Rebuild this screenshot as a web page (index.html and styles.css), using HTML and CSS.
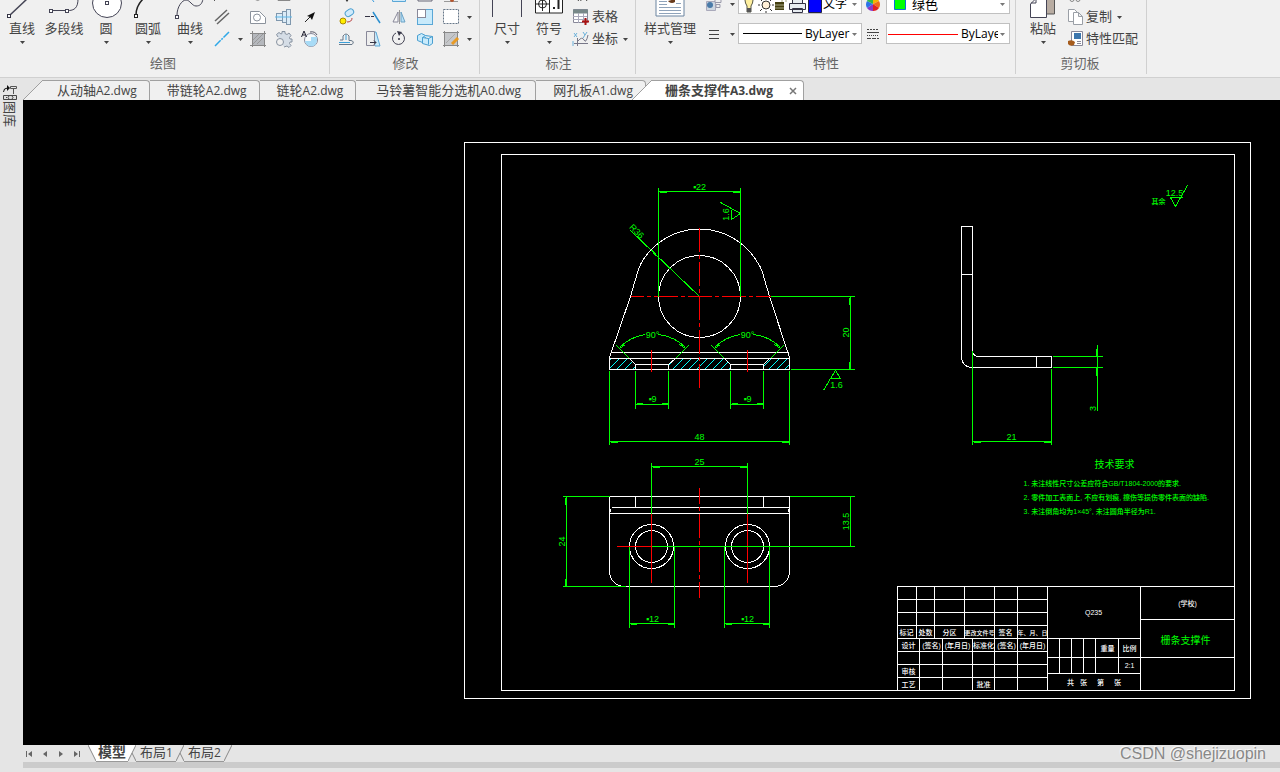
FILE: index.html
```html
<!DOCTYPE html>
<html lang="zh-CN">
  <head>
    <meta charset="UTF-8" />
    <meta name="viewport" content="width=device-width, initial-scale=1.0" />
    <title>栅条支撑件A3.dwg</title>
    <link rel="stylesheet" href="styles.css">
  </head>
  <body>
    <svg class="defs" width="0" height="0" aria-hidden="true">
      <symbol id="caret" viewBox="0 0 8 8"><path d="M2 3h5L4.500 6z" /></symbol>
    </svg>

    <header class="ribbon">
      <section class="group draw">
        <div class="group-body">
          <button class="big">
            <svg class="big-icon" viewBox="0 0 42 20"><path d="M9 15L26-1" stroke="#445" stroke-width="1.500" /><rect x="6.500" y="14.500" width="3" height="3" fill="#fff" stroke="#334" /></svg>
            <span>直线</span><svg class="caret"><use href="#caret" /></svg>
          </button>
          <button class="big">
            <svg class="big-icon" viewBox="0 0 42 20" fill="none" stroke="#445"><path d="M8 10.500H24C32 11 35 7 35-1" /><rect x="6.500" y="9.500" width="3" height="3" fill="#fff" /><rect x="22.500" y="9.500" width="3" height="3" fill="#fff" /></svg>
            <span>多段线</span><svg class="caret hidden"><use href="#caret" /></svg>
          </button>
          <button class="big">
            <svg class="big-icon" viewBox="0 0 42 20" fill="#fff" stroke="#445"><circle cx="22" cy="3" r="14.500" /><rect x="20.500" y="1.500" width="3" height="3" /></svg>
            <span>圆</span><svg class="caret"><use href="#caret" /></svg>
          </button>
          <button class="big">
            <svg class="big-icon" viewBox="0 0 42 20" fill="none" stroke="#222"><path d="M9 15Q9 6 16-1" stroke-width="1.500" /><rect x="7.500" y="14.500" width="3" height="3" fill="#fff" /></svg>
            <span>圆弧</span><svg class="caret"><use href="#caret" /></svg>
          </button>
          <button class="big">
            <svg class="big-icon" viewBox="0 0 42 20" fill="none" stroke="#445"><path d="M8 15C8 7 13 0 17 0S23 6 27 6 33 4 34-1" /><rect x="6.500" y="15.500" width="3" height="3" fill="#fff" /></svg>
            <span>曲线</span><svg class="caret"><use href="#caret" /></svg>
          </button>
          <div class="tools draw-tools">
            <button class="tool" aria-label="射线"><svg class="icon" viewBox="0 0 22 22"><path d="M3 17l2-2" stroke="#555" /></svg></button>
            <button class="tool" aria-label="点"><svg class="icon" viewBox="0 0 22 22"><path d="M7 15q4 3 7 0" fill="none" stroke="#888" /></svg></button>
            <button class="tool" aria-label="矩形"><svg class="icon" viewBox="0 0 22 22"><path d="M5 14v2.500h12V14" fill="none" stroke="#888" /></svg></button>
            <button class="tool" aria-label="多边形"><svg class="icon" viewBox="0 0 22 22"></svg></button>

            <button class="tool" aria-label="双线"><svg class="icon" viewBox="0 0 22 22"><path d="M4 15L16 4M6 18L18 7" stroke="#666" stroke-width="1.500" /></svg></button>
            <button class="tool" aria-label="孔"><svg class="icon" viewBox="0 0 22 22" fill="#fff" stroke="#8b929c"><path d="M3.500 17.500V5.500h9l6 6v6z" /><circle cx="10" cy="11.500" r="3.500" /></svg></button>
            <button class="tool" aria-label="轴"><svg class="icon" viewBox="0 0 22 22" fill="#dcecf7" stroke="#7f97ad"><rect x="3.500" y="7.500" width="6" height="7" /><rect x="9.500" y="5.500" width="4" height="11" /><rect x="13.500" y="3.500" width="4" height="15" /><path d="M2 11h17" stroke="#5db8ea" /></svg></button>
            <button class="tool" aria-label="箭头"><svg class="icon" viewBox="0 0 22 22"><path d="M6 16l7-7" stroke="#222" /><path d="M16 6l-3 8-2-3-3-1z" fill="#111" /></svg></button>

            <button class="tool" aria-label="构造线"><svg class="icon" viewBox="0 0 22 22"><path d="M4 18L18 4" stroke="#2fa8e8" stroke-width="1.500" stroke-dasharray="8 1 2 1" /></svg><svg class="caret"><use href="#caret" /></svg></button>
            <button class="tool" aria-label="填充"><svg class="icon" viewBox="0 0 22 22"><rect x="5" y="5" width="12" height="12" fill="#b5b8bd" /><path d="M5.500 3v16M17.500 3v16M3 5.500h16M3 17.500h16" stroke="#888" /><path d="M6 12l6-6M6 16L16 6M10 16l6-6" stroke="#999" /></svg></button>
            <button class="tool" aria-label="齿轮"><svg class="icon" viewBox="0 0 22 22" fill="#d5dde6" stroke="#8792a0"><path d="M5 9L3.500 6.500 6 4.500 8 6l1-.5V3.500h3v2l2 1 2-1.500 2 2.500-1.500 2 .5 1.500h2v3h-2l-.5 1.500 1.500 2-2 2-2-1.500-3 1" /><circle cx="7" cy="14" r="3.500" fill="#f0f0f0" /></svg></button>
            <button class="tool" aria-label="文字环绕"><svg class="icon" viewBox="0 0 22 22"><circle cx="12" cy="12" r="6.500" fill="#f6fafc" stroke="#889" /><path d="M12 9h6v3a6 6 0 0 1-12 1h6z" fill="#a8dbf6" /><path d="M2.500 9l2.500-6 2.500 6M3.500 7h3" fill="none" stroke="#223" /><path d="M11 4q5-1 7 3" fill="none" stroke="#556" /></svg></button>
          </div>
        </div>
        <h2>绘图</h2>
      </section>

      <section class="group">
        <div class="group-body">
          <div class="tools edit-tools">
            <button class="tool" aria-label="移动"><svg class="icon" viewBox="0 0 22 22"><path d="M9 15h4l-2 3z" fill="#333" /></svg></button>
            <button class="tool" aria-label="修剪"><svg class="icon" viewBox="0 0 22 22"><path d="M9 14l3 4" stroke="#39d" /></svg></button>
            <button class="tool" aria-label="拉伸"><svg class="icon" viewBox="0 0 22 22"><path d="M4.500 14v3.500h13V14" fill="#cfeafb" stroke="#5aa7d6" /></svg></button>
            <button class="tool" aria-label="阵列"><svg class="icon" viewBox="0 0 22 22"><path d="M4 14v3h14v-3" fill="none" stroke="#667" /></svg></button>
            <button class="tool" aria-label="分解"><svg class="icon" viewBox="0 0 22 22"><path d="M4 17.500h14" stroke="#999" /><circle cx="12" cy="16" r="2" fill="#b5532a" /></svg></button>

            <button class="tool" aria-label="复制对象"><svg class="icon" viewBox="0 0 22 22"><circle cx="7" cy="15" r="3" fill="#fe0" stroke="#a80" /><rect x="9" y="4" width="9" height="6" rx="3" transform="rotate(-35 13 7)" fill="#cfeafb" stroke="#4a9fd0" /><path d="M11 16q5 0 5-4" fill="none" stroke="#b44" /></svg></button>
            <button class="tool" aria-label="延伸"><svg class="icon" viewBox="0 0 22 22"><path d="M3 10.500h5m1 0h3" stroke="#334" /><path d="M11 6l7 11" stroke="#2a8fd0" stroke-width="1.500" /></svg></button>
            <button class="tool" aria-label="镜像"><svg class="icon" viewBox="0 0 22 22"><path d="M10 6v10H5z" fill="#f8f8f8" stroke="#889" /><path d="M13 6v10h4z" fill="#b8e0f8" stroke="#6aa2c4" /><path d="M11.500 4v14" stroke="#999" /></svg></button>
            <button class="tool" aria-label="缩放"><svg class="icon" viewBox="0 0 22 22"><rect x="3.500" y="3.500" width="15" height="15" fill="#c8eafb" stroke="#5aa7d6" /><rect x="3.500" y="3.500" width="8" height="8" fill="#fff" stroke="#889" /></svg></button>
            <button class="tool" aria-label="边界"><svg class="icon" viewBox="0 0 22 22"><rect x="3.500" y="3.500" width="15" height="14" fill="#fff" stroke="#678" stroke-dasharray="2 1" /></svg><svg class="caret"><use href="#caret" /></svg></button>

            <button class="tool" aria-label="偏移"><svg class="icon" viewBox="0 0 22 22"><path d="M3 16.500h13q3-3-1-4h-2V8q-3-4-6 0v4H4" fill="none" stroke="#678" /><path d="M3 14.500h11M10 7v5" stroke="#3b9fd8" /></svg></button>
            <button class="tool" aria-label="倾斜"><svg class="icon" viewBox="0 0 22 22"><path d="M10 4h4l4 14h-5z" fill="#c8eafb" stroke="#5aa7d6" /><path d="M4.500 3.500h8v14h-8z" fill="#eee" stroke="#889" /><path d="M8 14.500h6l-2-2m2 2l-2 2" fill="none" stroke="#334" /></svg></button>
            <button class="tool" aria-label="旋转"><svg class="icon" viewBox="0 0 22 22"><path d="M13 5a6 6 0 1 1-5 0" fill="none" stroke="#445" /><path d="M9 3l5 1-3 4z" fill="#334" /><circle cx="11" cy="11" r="1" fill="#334" /></svg></button>
            <button class="tool" aria-label="三维阵列"><svg class="icon" viewBox="0 0 22 22" fill="#c8eafb" stroke="#4a9fd0"><path d="M3.500 7.500l4-2 4 2v6l-3 1-5-2z" /><path d="M8.500 9.500l3-2 7 1v7l-3 2-7-2zM8.500 9.500l6 1 4-2M14.500 10.500v6" /></svg></button>
            <button class="tool" aria-label="编辑填充"><svg class="icon" viewBox="0 0 22 22"><rect x="5" y="5" width="12" height="12" fill="#c5c7ca" /><path d="M3 4.500h16M3 17.500h16M4.500 3v16M17.500 3v16" stroke="#888" /><path d="M6 15l9-9" stroke="#aaa" /><path d="M12 16l6-6" stroke="#e89a24" stroke-width="3" /></svg><svg class="caret"><use href="#caret" /></svg></button>
          </div>
        </div>
        <h2>修改</h2>
      </section>

      <section class="group">
        <div class="group-body">
          <button class="big">
            <svg class="big-icon" viewBox="0 0 42 20"><path d="M6.500 0v17M35.500 0v17" stroke="#445" /></svg>
            <span>尺寸</span><svg class="caret"><use href="#caret" /></svg>
          </button>
          <button class="big">
            <svg class="big-icon" viewBox="0 0 42 20" fill="#fff" stroke="#222"><path d="M7.500-1v14h27V-1M21.500 0v13" /><circle cx="14.500" cy="4" r="4" /><path d="M8 4h13M14.500 0v11" /><path d="M25 8h2M30.500 0v9" stroke-width="2" /></svg>
            <span>符号</span><svg class="caret"><use href="#caret" /></svg>
          </button>
          <div class="tools label-tools">
            <button class="tool" aria-label="引线"><svg class="icon" viewBox="0 0 22 22"><path d="M8 17l2-3 1 3M15 14l2 3" fill="none" stroke="#444" /></svg></button>
            <button class="tool"><svg class="icon" viewBox="0 0 22 22"><path d="M3.500 3.500h14v13h-14z" fill="#fff" stroke="#889" /><path d="M3 5.500h15" stroke="#788" stroke-width="4" /><path d="M3 10.500h14M3 13.500h14M8.500 7v10M13.500 7v10" stroke="#aab" /><path d="M12 15.500h7M15.500 12v7" stroke="#a11" stroke-width="2" /></svg><span>表格</span></button>
            <button class="tool"><svg class="icon" viewBox="0 0 22 22" fill="none"><path d="M7.500 10v8M4 15.500h14M8 13q4-5 6-1t4-5" stroke="#778" /><path d="M4 5l3 4m0-4L4 9M13 4l2 3m2-3l-4 6M3 13v5" stroke="#6ab0da" /></svg><span>坐标</span><svg class="caret"><use href="#caret" /></svg></button>
          </div>
        </div>
        <h2>标注</h2>
      </section>

      <section class="group props">
        <div class="group-body">
          <button class="big wide">
            <svg class="big-icon" viewBox="0 0 56 20"><path d="M14-1h28v17H14z" fill="#fff" stroke="#6b84a0" /><path d="M17 1.500h8M17 4.500h8M17 7.500h22M17 10.500h22M17 13.500h22M34 3.500h5" stroke="#8fa3ba" /><path d="M26 1l7-2v3q-3 2-6 0z" fill="#6a3c1c" /></svg>
            <span>样式管理</span><svg class="caret"><use href="#caret" /></svg>
          </button>
          <div class="prop-grid">
            <button class="tool" aria-label="图层"><svg class="icon" viewBox="0 0 22 22"><path d="M3.500 8.500h9v9h-9z" fill="#cdd6e0" stroke="#aab" /><circle cx="7" cy="12" r="3" fill="#4a7ba8" /><path d="M12 6.500h6v3h-6zM13 11.500h4v3h-4z" fill="#eee" stroke="#99a" /></svg><svg class="caret"><use href="#caret" /></svg></button>
            <div class="combo">
              <svg class="layer-icons" viewBox="0 0 84 20">
                <path d="M6 6q0-4 4-4t4 4q0 3-2 6v6H8v-6Q6 9 6 6z" fill="#fff0a0" stroke="#554" /><path d="M8 14h4v4H8z" fill="#555" />
                <circle cx="27" cy="11" r="4" fill="#fff0d8" stroke="#333" /><path d="M27 3v2M27 17v2M19 11h2M33 11h2M21 5l2 2M31 15l2 2M21 17l2-2M31 7l2-2" stroke="#333" />
                <path d="M36 8h9v8h-9z" fill="#443f10" /><path d="M43 8V4h4v4M36 11h9M36 14h9" fill="none" stroke="#aa8" />
                <path d="M53.500 9V3h10v6M50.500 9.500h16v6h-16zM53.500 14.500h10v4h-10z" fill="#e8edf2" stroke="#334" />
                <path d="M69.500 5.500h13v13h-13z" fill="#00f" stroke="#224" />
              </svg>
              <select aria-label="图层"><option>文字</option></select><svg class="caret"><use href="#caret" /></svg>
            </div>
            <button class="tool wheel" aria-label="颜色"><svg class="icon" viewBox="0 0 22 22"><path d="M11 11V4a7 7 0 0 1 6 4z" fill="#f5b400" /><path d="M11 11l6-3a7 7 0 0 1 0 7z" fill="#f06a1c" /><path d="M11 11l6 4a7 7 0 0 1-6 3z" fill="#e32020" /><path d="M11 11v7a7 7 0 0 1-6-3z" fill="#8a38c8" /><path d="M11 11l-6 4a7 7 0 0 1 0-7z" fill="#2c74e8" /><path d="M11 11L5 8a7 7 0 0 1 6-4z" fill="#32b84a" /></svg></button>
            <div class="combo">
              <svg class="swatch" viewBox="0 0 25 20"><path d="M7.500 4.500h11v11h-11z" fill="#0f0" stroke="#0a6fd6" /></svg>
              <select class="color" aria-label="颜色"><option>绿色</option></select><svg class="caret"><use href="#caret" /></svg>
            </div>

            <button class="tool" aria-label="线宽"><svg class="icon" viewBox="0 0 22 22"><path d="M6 7.500h10M6 11.500h10M6 15.500h10" stroke="#444" /></svg><svg class="caret"><use href="#caret" /></svg></button>
            <div class="combo">
              <svg class="line-sample" viewBox="0 0 66 20"><path d="M4 9.500h59" stroke="#000" /></svg>
              <select aria-label="线型"><option>ByLayer</option></select><svg class="caret"><use href="#caret" /></svg>
            </div>
            <button class="tool" aria-label="线宽样式"><svg class="icon" viewBox="0 0 22 22" stroke="#444"><path d="M5 6.500h12" stroke-dasharray="2 1" /><path d="M5 9.500h12" /><path d="M5 12.500h12" stroke-dasharray="1 1" /><path d="M5 15.500h12" stroke-dasharray="4 1" /></svg></button>
            <div class="combo">
              <svg class="line-sample red" viewBox="0 0 74 20"><path d="M1 10.500h70" stroke="#f00" /></svg>
              <select aria-label="线宽"><option>ByLayer</option></select><svg class="caret"><use href="#caret" /></svg>
            </div>
          </div>
        </div>
        <h2>特性</h2>
      </section>

      <section class="group clipboard">
        <div class="group-body">
          <button class="big">
            <svg class="big-icon" viewBox="0 0 42 20"><path d="M24.500-1h8v15h-8z" fill="#b8aca2" stroke="#555" /><path d="M8.500 4l5-5h11v18.500h-16z" fill="#fff" stroke="#445" /><path d="M9 3h5V0" fill="none" stroke="#445" /></svg>
            <span>粘贴</span><svg class="caret"><use href="#caret" /></svg>
          </button>
          <div class="tools label-tools">
            <button class="tool" aria-label="剪切"><svg class="icon" viewBox="0 0 22 22" fill="none" stroke="#888"><circle cx="8" cy="15.500" r="2" /><circle cx="14" cy="15.500" r="2" /></svg></button>
            <button class="tool"><svg class="icon" viewBox="0 0 22 22" fill="#fff" stroke="#9a9fa6"><path d="M4.500 3.500h6l3 3v9h-9z" /><path d="M9.500 6.500h5l4 4v8h-9zM14.500 6.500v4h4" /></svg><span>复制</span><svg class="caret"><use href="#caret" /></svg></button>
            <button class="tool"><svg class="icon" viewBox="0 0 22 22"><path d="M7.500 3.500h11v14h-11z" fill="#fff" stroke="#889" /><path d="M10 5h7v6h-7z" fill="#3c76ad" /><path d="M13 13.500h4M13 15.500h4" stroke="#889" /><path d="M4 13q4-2 7 1l-1 3q-4 2-6-1z" fill="#a65c1d" /></svg><span>特性匹配</span></button>
          </div>
        </div>
        <h2>剪切板</h2>
      </section>
    </header>

    <main class="main">
      <aside class="rail">
        <button>
          <svg viewBox="0 0 16 16" fill="none" stroke="#111"><path d="M1.500 7q0-4 4-4" /><path d="M5 0l3 3-3 3z" fill="#111" stroke="none" /><path d="M8.500 1.500h6v2h-6zM11.500 4v5" stroke="#555" /><path d="M1.500 10.500h13v4h-13z" fill="#ddd" stroke="#444" /><path d="M4 12.500h1M7 11l-1 1.500L7 14M10 11l1 1.500L10 14" stroke="#444" /></svg>
          <span>图库</span>
        </button>
      </aside>

      <div class="workspace">
        <nav class="file-tabs">
          <svg class="slant" viewBox="0 0 20 20"><path d="M0 20L20 0v20z" fill="#f0f0f0" /><path d="M0 20L20 0" stroke="#a0a0a0" /></svg>
          <button class="file-tab first">从动轴<span>A2.dwg</span></button>
          <button class="file-tab">带链轮<span>A2.dwg</span></button>
          <button class="file-tab">链轮<span>A2.dwg</span></button>
          <button class="file-tab roomy">马铃薯智能分选机<span>A0.dwg</span></button>
          <button class="file-tab">网孔板<span>A1.dwg</span></button>
          <svg class="slant over" viewBox="0 0 20 20"><path d="M0 20L20 0v20z" fill="#fff" /><path d="M0 20L20 0" stroke="#a0a0a0" /></svg>
          <div class="file-tab active">
            <button>栅条支撑件<span>A3.dwg</span></button>
            <button aria-label="关闭"><svg viewBox="0 0 8 8"><path d="M1 1l6 6M7 1L1 7" stroke="#777" stroke-width="1.500" /></svg></button>
          </div>
        </nav>

        <svg class="canvas" viewBox="23 100 1257 645" role="img" aria-label="栅条支撑件图纸">
          <defs>
            <clipPath id="section">
              <path d="M609 358h20l6 6v5h-26zM675 358h49l6 6v5h-62v-5zM769 358h20v11h-26v-5z" />
            </clipPath>
          </defs>
          <g transform="translate(.5 .5)">
            <!-- sheet frames -->
            <path class="w" d="M464 142H1250V698H464zM501 154H1234V690H501z" />

            <!-- front view -->
            <path class="c" clip-path="url(#section)" d="M600 369l11-11M608 369l11-11M616 369l11-11M624 369l11-11M632 369l11-11M664 369l11-11M672 369l11-11M680 369l11-11M688 369l11-11M696 369l11-11M704 369l11-11M712 369l11-11M720 369l11-11M728 369l11-11M760 369l11-11M768 369l11-11M776 369l11-11M784 369l11-11" />
            <path class="w" d="M609 369V357L630 296 637 272Q639 266 641 262A67 67 0 0 1 757 262Q760 266 762 272L769 296 789 357V369zM611 352H788M609 358H789M635 369V364H668V369M730 369V364H763V369M629 358l6 6M675 358l-7 6M724 358l6 6M769 358l-6 6" />
            <circle class="w" cx="699" cy="296" r="41" />
            <path class="r dash" stroke-dashoffset="11" d="M630 296H770" />
            <path class="r dash" d="M699 227V388" />
            <path class="r" d="M651 349V371M747 349V371" />
            <path class="g" d="M658 187V296M740 187V296M658 191H740M659 192h7M732 192h7" />
            <path class="g" d="M630 230L699 296M651 250l5 6M652 250l4 5" />
            <path class="g" d="M616 345l13 13M688 345l-13 13M711 345l13 13M783 345l-13 13" />
            <path class="g" d="M619 347A46 46 0 0 1 645 334M658 334A46 46 0 0 1 685 347M714 347A46 46 0 0 1 740 334M753 334A46 46 0 0 1 780 347" />
            <path class="g" d="M619 348l6-4M685 348l-6-4M714 348l6-4M780 348l-6-4" />
            <path class="g" d="M635 370V408M668 370V408M635 404H668M636 403h6M661 403h6M730 370V408M763 370V408M730 404H763M731 403h6M756 403h6" />
            <path class="g" d="M609 370V444M789 370V444M609 441H789M610 442h7M781 442h7" />
            <path class="g" d="M770 296H854M790 369H854M850 296V369M849 297v7M849 361v7" />
            <path class="g" d="M720 202l20 11-9 6v-10M823 390l7-12 5-8 5 8h-10" />
            <g class="dim">
              <text x="699" y="189">▪22</text>
              <text x="652" y="337">90°</text>
              <text x="747" y="337">90°</text>
              <text x="652" y="401">▪9</text>
              <text x="747" y="401">▪9</text>
              <text x="699" y="439">48</text>
              <text x="836" y="387">1.6</text>
              <text transform="translate(634 233) rotate(45)">R36</text>
              <text transform="translate(728 214) rotate(-90)">1.6</text>
              <text transform="translate(848 332) rotate(-90)">20</text>
            </g>

            <!-- top view -->
            <path class="w" d="M609 496H789V571A15 15 0 0 1 774 586H624A15 15 0 0 1 609 571zM611 507H788M609 513H789M610 511V508M788 511V508M635 496V507M763 496V507" />
            <g class="w">
              <circle cx="651" cy="546" r="22" /><circle cx="651" cy="546" r="16" />
              <circle cx="747" cy="546" r="22" /><circle cx="747" cy="546" r="16" />
            </g>
            <path class="r" d="M616 546H651M651 513V582M747 513V582" />
            <path class="r dash" stroke-dashoffset="8" d="M699 487V597" />
            <path class="g" d="M651 462V513M747 462V513M651 466H747M652 467h7M739 467h7" />
            <path class="g" d="M562 496H609M562 586H625M566 496V586M565 497v7M565 578v7" />
            <path class="g" d="M789 496H854M651 546H854M850 496V546" />
            <path class="g" d="M629 546V627M674 546V627M629 623H674M630 624h6M667 624h6M724 546V627M769 546V627M724 623H769M725 624h6M762 624h6" />
            <g class="dim">
              <text x="699" y="464">25</text>
              <text x="652" y="621">▪12</text>
              <text x="747" y="621">▪12</text>
              <text transform="translate(564 541) rotate(-90)">24</text>
              <text transform="translate(848 521) rotate(-90)">13.5</text>
            </g>

            <!-- side view -->
            <path class="w" d="M972 350V226H961V357A10 10 0 0 0 971 367H1051V356H978A6 6 0 0 1 972 350M961 274H972M1036 356V367" />
            <path class="g" d="M972 350V444M1051 368V444M972 441H1051M973 442h7M1043 442h7M1052 356H1102M1052 367H1102M1097 344V410M1096 348v8M1096 367v8" />
            <path class="g" d="M1170 197h12M1170 197l5 9 12-21" />
            <g class="dim">
              <text x="1011" y="439">21</text>
              <text x="1174" y="195">12.5</text>
              <text transform="translate(1095 408) rotate(-90)">3</text>
            </g>
            <text class="note" x="1151" y="203">其余</text>

            <text class="note-title" x="1094" y="467">技术要求</text>
            <g class="note">
              <text x="1023" y="485">1. 未注线性尺寸公差应符合GB/T1804-2000的要求.</text>
              <text x="1023" y="499">2. 零件加工表面上, 不应有划痕, 擦伤等损伤零件表面的缺陷.</text>
              <text x="1023" y="513">3. 未注倒角均为1×45°, 未注圆角半径为R1.</text>
            </g>

            <!-- title block -->
            <path class="w" d="M897 690V586H1234M1047 586V690M1140 586V690M897 599H1047M897 612H1047M897 625H1047M897 638H1140M897 651H1047M897 664H1047M897 677H1047" />
            <path class="w" d="M916 586V638M934 586V638M964 586V638M994 586V690M1017 586V690M919 638V690M942 638V690M972 638V690" />
            <path class="w" d="M1047 657H1140M1047 673H1140M1059 638V673M1071 638V673M1083 638V673M1095 638V673M1118 638V673M1140 619H1234M1140 657H1234" />
            <g class="cell">
              <text x="906" y="634">标记</text><text x="925" y="634">处数</text><text x="949" y="634">分区</text>
              <text class="tight" x="979" y="634">更改文件号</text><text x="1005" y="634">签名</text><text class="tight" x="1032" y="634">年、月、日</text>
              <text x="908" y="647">设计</text><text x="931" y="647">(签名)</text><text x="957" y="647">(年月日)</text>
              <text x="983" y="647">标准化</text><text x="1006" y="647">(签名)</text><text x="1032" y="647">(年月日)</text>
              <text x="908" y="673">审核</text><text x="908" y="686">工艺</text><text x="983" y="686">批准</text>
              <text x="1093" y="614">Q235</text><text x="1107" y="650">重量</text><text x="1129" y="650">比例</text><text x="1129" y="667">2:1</text>
              <text x="1070" y="684">共</text><text x="1083" y="684">张</text><text x="1100" y="684">第</text><text x="1117" y="684">张</text>
              <text x="1187" y="605">(学校)</text>
            </g>
            <text class="note-title" x="1160" y="643">栅条支撑件</text>
          </g>
        </svg>

        <footer class="layout-bar">
          <nav class="layout-tabs">
            <div class="pager">
              <button aria-label="第一个"><svg viewBox="0 0 8 8"><path d="M1 1h1v6H1zM7 1v6L3 4z" /></svg></button>
              <button aria-label="上一个"><svg viewBox="0 0 8 8"><path d="M6 1v6L2 4z" /></svg></button>
              <button aria-label="下一个"><svg viewBox="0 0 8 8"><path d="M2 1v6l4-3z" /></svg></button>
              <button aria-label="最后一个"><svg viewBox="0 0 8 8"><path d="M6 1h1v6H6zM1 1v6l4-3z" /></svg></button>
            </div>
            <svg class="edge" viewBox="0 0 8 17"><path d="M0 0h8v16z" fill="#fff" /><path d="M0 0l8 16" stroke="#888" /></svg>
            <button class="layout-tab current">模型</button>
            <svg class="edge" viewBox="0 0 8 17"><path d="M0 0h8L0 16z" fill="#fff" /><path d="M8 0L0 16M4 8l4 8" stroke="#888" /></svg>
            <button class="layout-tab">布局<span>1</span></button>
            <svg class="edge" viewBox="0 0 8 17"><path d="M8 0L0 16M4 8l4 8" stroke="#888" /></svg>
            <button class="layout-tab">布局<span>2</span></button>
            <svg class="edge" viewBox="0 0 8 17"><path d="M8 0L0 16" stroke="#888" /></svg>
          </nav>
          <div class="scroll-band"></div>
          <span class="watermark">CSDN @shejizuopin</span>
        </footer>
      </div>
    </main>
  </body>
</html>
```
FILE: styles.css
```css
:root {
  --ribbon: #f0f0f0;
  --bar: #e5e5e5;
  --line: #d0d0d0;
  --edge: #a0a0a0;
  --text: #444;
}

* {
  box-sizing: border-box;
  margin: 0;
  padding: 0;
}

body {
  height: 100vh;
  display: flex;
  flex-direction: column;
  overflow: hidden;
  font-family: "Open Sans", "Noto Sans CJK SC", sans-serif;
  font-size: 13px;
  color: var(--text);
  background: var(--bar);
}

button,
select {
  font: inherit;
  color: inherit;
  background: none;
  border: 0;
}

svg {
  display: block;
  flex: none;
}

.defs {
  position: absolute;
}

/* ribbon */
.ribbon {
  flex: none;
  height: 78px;
  display: flex;
  overflow: hidden;
  background: var(--ribbon);
  border-bottom: 1px solid var(--line);
}

.group {
  position: relative;
  display: flex;
  flex-direction: column;
  flex: none;
  padding: 0 5px 0 6px;
}

.group::after {
  content: "";
  position: absolute;
  top: 0;
  right: 0;
  bottom: 3px;
  width: 1px;
  background: var(--line);
}

.group.draw {
  padding: 0 5px 0 1px;
}

.group.props {
  padding-right: 6px;
}

.group.clipboard {
  padding-right: 9px;
}

.group-body {
  height: 50px;
  display: flex;
  align-items: flex-end;
}

.group h2 {
  font-size: 13px;
  font-weight: 400;
  line-height: 27px;
  text-align: center;
  color: #666;
}

.big {
  width: 42px;
  height: 50px;
  display: flex;
  flex-direction: column;
  align-items: center;
  white-space: nowrap;
}

.big.wide {
  width: 56px;
}

.big-icon {
  width: 100%;
  height: 20px;
}

.big span {
  line-height: 16px;
  padding-bottom: 2px;
}

.caret {
  width: 8px;
  height: 8px;
  fill: #444;
}

.hidden {
  visibility: hidden;
}

.tools {
  display: grid;
  grid-auto-rows: 22px;
}

.draw-tools {
  grid-template-columns: 36px 26px 26px 26px;
}

.edit-tools {
  grid-template-columns: 26px 26px 26px 26px 35px;
}

.tool {
  display: flex;
  align-items: center;
  line-height: 20px;
  white-space: nowrap;
}

.tool span {
  padding-bottom: 2px;
}

.tool .caret {
  margin-left: 3px;
}

.icon {
  width: 22px;
  height: 22px;
}

.label-tools .caret {
  margin-right: 2px;
}

.prop-grid {
  display: grid;
  grid-template-columns: 35px 124px 24px 124px;
  grid-auto-rows: 21px;
  row-gap: 9px;
  padding: 0 0 6px 5px;
}

.combo {
  display: flex;
  align-items: center;
  min-width: 0;
  padding-right: 3px;
  background: #fff;
  border: 1px solid #c0c0c0;
}

.combo .caret {
  fill: #777;
}

.combo select {
  flex: 1;
  min-width: 0;
  height: 19px;
  appearance: none;
  font-size: 12px;
  color: #000;
  outline: none;
  overflow: hidden;
}

.combo .color {
  font-size: 13px;
}

.layer-icons {
  width: 84px;
  height: 20px;
}

.swatch {
  width: 25px;
  height: 20px;
}

.line-sample {
  width: 66px;
  height: 20px;
}

.line-sample.red {
  width: 74px;
}

/* workspace */
.main {
  flex: 1;
  min-height: 0;
  display: flex;
}

.rail {
  flex: none;
  width: 23px;
  padding: 7px 0 0 2px;
}

.rail button {
  display: flex;
  flex-direction: column;
  align-items: center;
}

.rail svg {
  width: 16px;
  height: 16px;
}

.rail span {
  writing-mode: vertical-rl;
  text-orientation: sideways;
  line-height: 14px;
}

.workspace {
  flex: 1;
  min-width: 0;
  display: flex;
  flex-direction: column;
}

.file-tabs {
  flex: none;
  height: 22px;
  display: flex;
  align-items: flex-end;
}

.slant {
  width: 20px;
  height: 20px;
}

.slant.over {
  margin-left: -14px;
}

.file-tab {
  height: 20px;
  padding: 0 12px 0 17px;
  line-height: 18px;
  white-space: nowrap;
  background: var(--ribbon);
  border: 1px solid var(--edge);
  border-width: 1px 1px 0 0;
  border-radius: 0 4px 0 0;
}

.file-tab.first {
  padding-left: 14px;
}

.file-tab.roomy {
  padding: 0 14px 0 20px;
}

.file-tab span {
  font-size: 12px;
}

.file-tab.active {
  display: flex;
  align-items: center;
  gap: 16px;
  padding: 0 6px 0 13px;
  background: #fff;
}

.file-tab.active button {
  font-weight: 700;
  line-height: 18px;
}

.file-tab.active svg {
  width: 8px;
  height: 8px;
}

/* drawing */
.canvas {
  flex: 1;
  width: 100%;
  min-height: 0;
  background: #000;
  font-family: "Liberation Sans Narrow", "Liberation Sans", "Noto Sans CJK SC", sans-serif;
}

.w,
.g,
.r,
.c {
  fill: none;
  stroke: #fff;
  shape-rendering: crispEdges;
}

.g {
  stroke: #0f0;
}

.r {
  stroke: #f00;
}

.c {
  stroke: #0ff;
}

.dash {
  stroke-dasharray: 24 3 4 3;
}

.dim {
  font-size: 9px;
  text-anchor: middle;
  fill: #0f0;
}

.note {
  font-size: 7px;
  font-weight: 500;
  fill: #0f0;
}

.note-title {
  font-size: 10px;
  fill: #0f0;
}

.cell {
  font-size: 7px;
  font-weight: 500;
  text-anchor: middle;
  fill: #fff;
}

.tight {
  font-size: 6px;
}

/* layout tabs */
.layout-bar {
  position: relative;
  flex: none;
  height: 27px;
}

.layout-tabs {
  height: 17px;
  display: flex;
}

.pager {
  width: 65px;
  display: flex;
  align-items: center;
  gap: 8px;
  padding-left: 2px;
}

.pager svg {
  width: 8px;
  height: 8px;
  fill: #666;
}

.edge {
  width: 8px;
  height: 17px;
}

.layout-tab {
  height: 17px;
  padding: 0 3px 2px 4px;
  line-height: 14px;
  border-bottom: 1px solid #999;
}

.layout-tab span {
  font-size: 12px;
}

.layout-tab.current {
  padding: 0 2px 2px;
  font-size: 14px;
  font-weight: 700;
  background: #fff;
}

.scroll-band {
  height: 6px;
  background: #cbcbcb;
}

.watermark {
  position: absolute;
  right: 14px;
  top: 0;
  font-family: "Liberation Sans", sans-serif;
  font-size: 16px;
  line-height: 18px;
  color: #888;
  text-shadow: -1px -1px 0 #f8f8f8;
}
```
